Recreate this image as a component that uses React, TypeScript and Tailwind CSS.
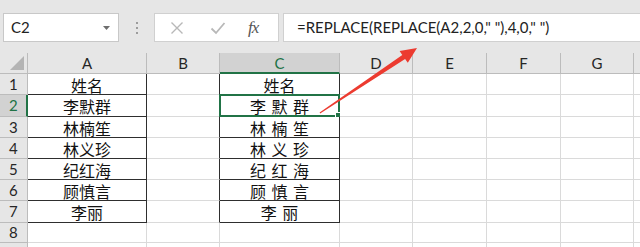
import React from 'react';

const cols = [
  { key: 'A', w: 'w-[119px]' },
  { key: 'B', w: 'w-[73px]' },
  { key: 'C', w: 'w-[120px]' },
  { key: 'D', w: 'w-[73px]' },
  { key: 'E', w: 'w-[74px]' },
  { key: 'F', w: 'w-[74px]' },
  { key: 'G', w: 'w-[73px]' },
  { key: 'H', w: 'w-[60px]' },
];

const rowHeights = ['h-[21px]', 'h-[22px]', 'h-[21px]', 'h-[21px]', 'h-[21px]', 'h-[21px]', 'h-[22px]', 'h-[20px]', 'h-[21px]'];

const namesA = ['姓名', '李默群', '林楠笙', '林义珍', '纪红海', '顾慎言', '李丽'];
const namesC = ['姓名', '李 默 群', '林 楠 笙', '林 义 珍', '纪 红 海', '顾 慎 言', '李 丽'];

const latin = "font-['Lato','Open_Sans',sans-serif]";
const cjk = "font-['Noto_Sans_CJK_SC','Noto_Sans',sans-serif]";

function FormulaBar() {
  return (
    <div className="flex items-start h-[53px] pt-[13px]">
      {/* name box */}
      <div className="ml-[3px] w-[116px] h-[29px] bg-white border border-[#c8c8c8] flex items-center justify-between pl-[7px] pr-[8px]">
        <span className={`${latin} text-[15px] text-[#222]`}>C2</span>
        <svg width="7" height="4" viewBox="0 0 7 4">
          <path d="M0 0H7L3.5 4Z" fill="#6e6e6e" />
        </svg>
      </div>
      {/* dots */}
      <div className="w-[35px] h-[29px] flex flex-col items-center justify-center gap-[3px]">
        <span className="w-[2px] h-[2px] bg-[#9c9c9c]" />
        <span className="w-[2px] h-[2px] bg-[#9c9c9c]" />
        <span className="w-[2px] h-[2px] bg-[#9c9c9c]" />
      </div>
      {/* buttons */}
      <div className="w-[125px] h-[29px] bg-white border border-[#d0d0d0] flex items-center">
        <svg width="14" height="14" viewBox="0 0 14 14" className="ml-[15px]">
          <path d="M1.5 1.5L12.5 12.5M12.5 1.5L1.5 12.5" stroke="#b8b8b8" strokeWidth="1.4" />
        </svg>
        <svg width="16" height="14" viewBox="0 0 16 14" className="ml-[26px]">
          <path d="M1.5 7.5L6 12L14.5 2" stroke="#b8b8b8" strokeWidth="1.8" fill="none" />
        </svg>
        <span className="ml-[22px] font-['Liberation_Serif',serif] italic text-[17px] text-[#555] leading-none tracking-[-1px]">fx</span>
      </div>
      {/* formula */}
      <div className="ml-[4px] flex-1 min-w-0 h-[29px] bg-white border border-[#d0d0d0] border-r-0 flex items-center pl-[13px]">
        <span className={`${latin} text-[15px] text-[#222] whitespace-pre`}>=REPLACE(REPLACE(A2,2,0," "),4,0," ")</span>
      </div>
    </div>
  );
}

function HeaderRow() {
  return (
    <div className="flex h-[21px]">
      <div className="w-[28px] shrink-0 bg-[#e6e6e6] border-r border-b border-[#bcbcbc] flex items-end justify-end pr-[3px] pb-[3px]">
        <svg width="14" height="14" viewBox="0 0 14 14">
          <path d="M14 0V14H0Z" fill="#b4b4b4" />
        </svg>
      </div>
      {cols.map((c) => {
        const sel = c.key === 'C';
        return (
          <div
            key={c.key}
            className={`${c.w} shrink-0 border-r flex items-center justify-center ${latin} text-[15px] leading-[18px] ${
              sel
                ? 'bg-[#d2d2d2] border-[#bcbcbc] border-b-2 border-b-[#217346] text-[#217346]'
                : 'bg-[#e6e6e6] border-[#bcbcbc] border-b text-[#262626]'
            }`}
          >
            {c.key === 'H' ? '' : c.key}
          </div>
        );
      })}
    </div>
  );
}

function Cell({ col, r }: { col: string; r: number }) {
  const inTable = r < 7;
  const isData = inTable && (col === 'A' || col === 'C');
  const leftOfC = inTable && col === 'B';
  let text = '';
  if (isData) text = col === 'A' ? namesA[r] : namesC[r];
  const border = isData
    ? 'border-r border-b border-[#2e2e2e]'
    : leftOfC
      ? 'border-r border-b border-r-[#2e2e2e] border-b-[#dadada]'
      : 'border-r border-b border-[#dadada]';
  const w = cols.find((c) => c.key === col)!.w;
  const selected = col === 'C' && r === 1;
  return (
    <div className={`${w} shrink-0 relative bg-white ${border} flex items-center justify-center pt-[2px]`}>
      {text && (
        <span className={`${cjk} text-[16px] leading-[17px] text-[#111] whitespace-pre [word-spacing:2px]`}>{text}</span>
      )}
      {selected && (
        <>
          <div className="absolute -left-[1px] -top-[1px] -right-[1px] -bottom-[1px] border-2 border-[#217346]" />
          <div className="absolute -right-[3px] -bottom-[3px] w-[5px] h-[5px] bg-[#217346] border border-white box-content" />
        </>
      )}
    </div>
  );
}

function Grid() {
  return (
    <div className="flex flex-col">
      <HeaderRow />
      {rowHeights.map((h, r) => {
        const sel = r === 1;
        return (
          <div key={r} className={`flex ${h} shrink-0`}>
            <div
              className={`w-[28px] shrink-0 border-b flex items-center pl-[9px] ${latin} text-[15px] leading-[17px] ${
                sel
                  ? 'bg-[#d2d2d2] border-b-[#bcbcbc] border-r-2 border-r-[#217346] text-[#217346]'
                  : 'bg-[#e6e6e6] border-b-[#bcbcbc] border-r border-r-[#bcbcbc] text-[#262626]'
              }`}
            >
              {r < 8 ? r + 1 : ''}
            </div>
            {cols.map((c) => (
              <Cell key={c.key} col={c.key} r={r} />
            ))}
          </div>
        );
      })}
    </div>
  );
}

function Arrow() {
  return (
    <svg className="absolute left-0 top-0 pointer-events-none" width="640" height="247" viewBox="0 0 640 247">
      <polygon
        points="320.2,113.6 319.6,112.5 402.3,55 399.6,50.9 417,48 407.8,62.8 405.1,58.9"
        fill="#ec3b30"
      />
    </svg>
  );
}

export default function App() {
  return (
    <div className="relative w-[640px] h-[247px] overflow-hidden bg-[#e6e6e6] select-none">
      <FormulaBar />
      <Grid />
      <Arrow />
    </div>
  );
}
